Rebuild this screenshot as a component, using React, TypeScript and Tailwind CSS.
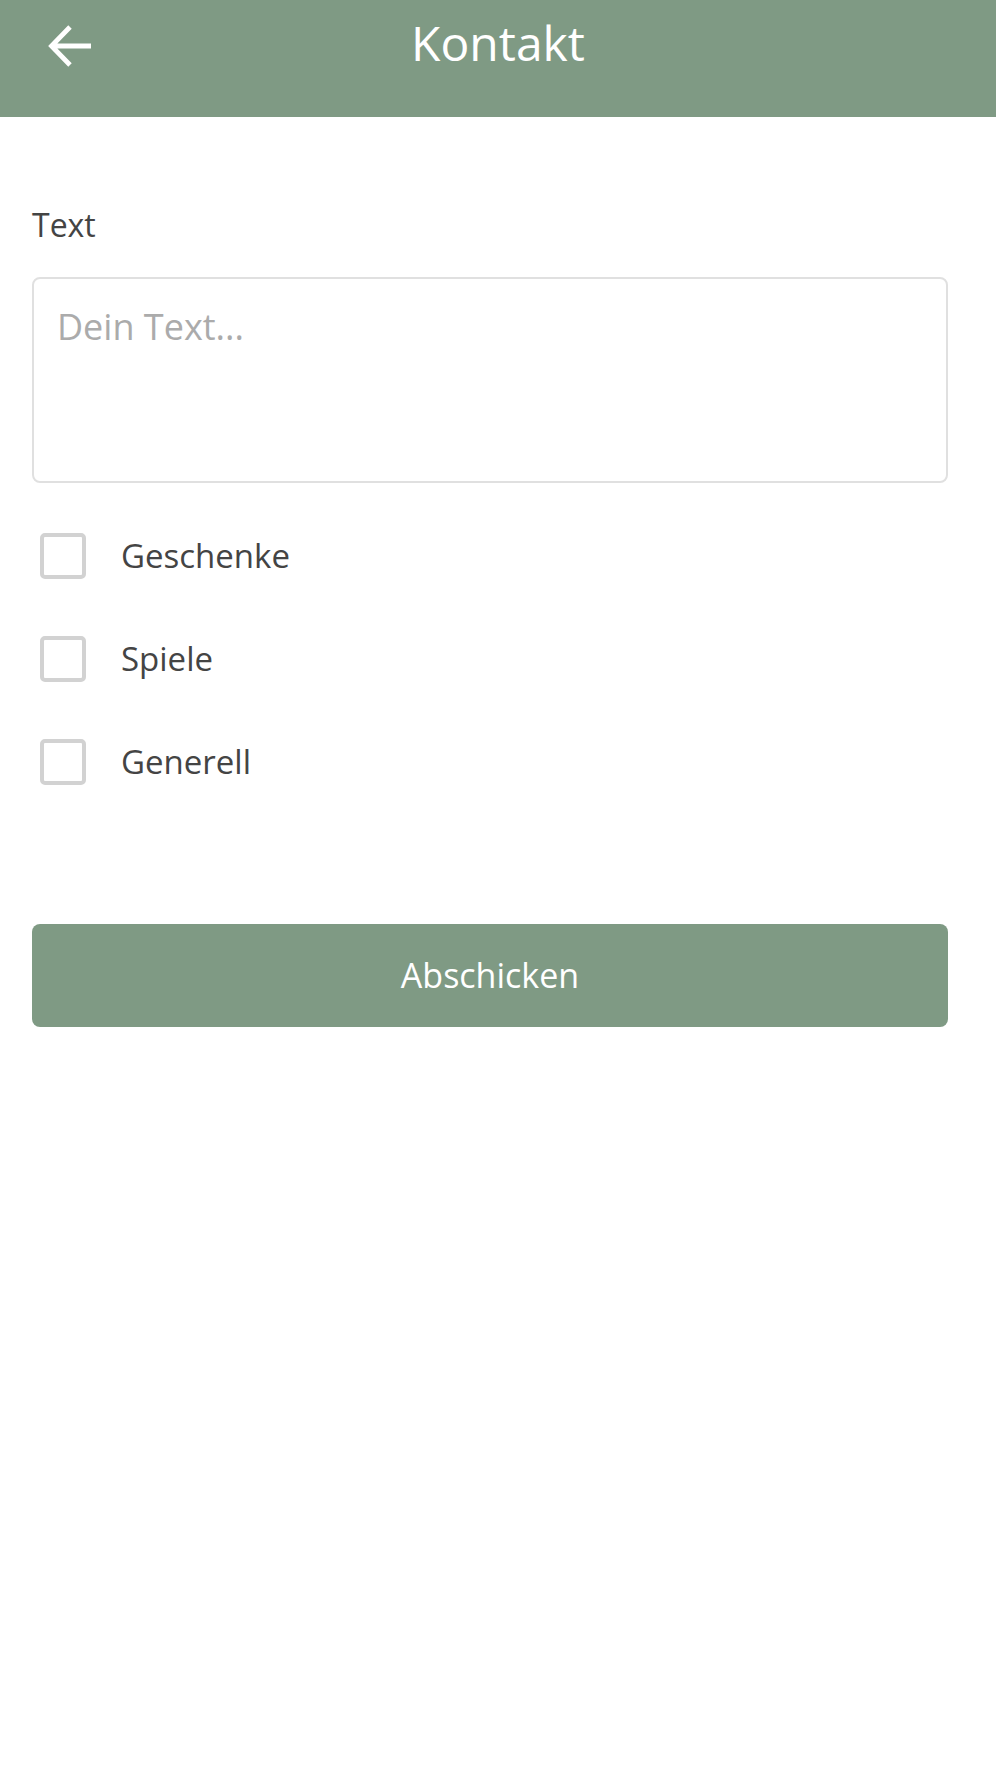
import React, { useState } from "react";

const topics = ["Geschenke", "Spiele", "Generell"];

const BackArrow = () => (
  <svg width="44" height="44" viewBox="0 0 44 44" fill="none">
    <path
      d="M43 22H5M22 3L3.5 22l18.5 19"
      stroke="white"
      strokeWidth="4.8"
      strokeLinecap="butt"
      strokeLinejoin="miter"
    />
  </svg>
);

const ContactPage = () => {
  const [text, setText] = useState("");
  const [checked, setChecked] = useState<Record<string, boolean>>({});

  const toggle = (topic: string) => {
    setChecked({ ...checked, [topic]: !checked[topic] });
  };

  return (
    <div className="min-h-screen bg-white font-['Open_Sans',sans-serif]">
      {/* toolbar */}
      <header className="w-[996px] h-[117px] bg-[#7f9a84] grid grid-cols-[1fr_auto_1fr] items-start">
        <div className="pl-[48px] pt-[24px]">
          <button className="block">
            <BackArrow />
          </button>
        </div>
        <h1 className="pt-[19px] text-[48px] leading-[48px] text-white">Kontakt</h1>
        <div />
      </header>

      <main className="ml-[32px] w-[916px] flex flex-col">
        <label htmlFor="text" className="mt-[88px] text-[32px] leading-[40px] text-[#444]">
          Text
        </label>
        <textarea
          id="text"
          value={text}
          onChange={(e) => setText(e.target.value)}
          placeholder="Dein Text..."
          className="mt-[32px] h-[206px] w-full resize-none rounded-[8px] border-2 border-[#e0e0e0] pl-[23px] pt-[24px] text-[36px] leading-[48px] text-[#444] placeholder:text-[#ababab] outline-none"
        />

        <div className="mt-[21px] flex flex-col">
          {topics.map((topic) => (
            <label key={topic} className="h-[103px] flex items-center pl-[8px] cursor-pointer">
              <span
                onClick={() => toggle(topic)}
                className={`w-[46px] h-[46px] rounded-[5px] border-4 ${
                  checked[topic] ? "border-[#7f9a84] bg-[#7f9a84]" : "border-[#d2d2d2] bg-white"
                }`}
              />
              <span className="ml-[35px] text-[33px] leading-[40px] text-[#444]">{topic}</span>
            </label>
          ))}
        </div>

        <button className="mt-[111px] h-[103px] w-full rounded-[8px] bg-[#7f9a84] text-[34px] text-white flex items-center justify-center">
          Abschicken
        </button>
      </main>
    </div>
  );
};

export default ContactPage;
